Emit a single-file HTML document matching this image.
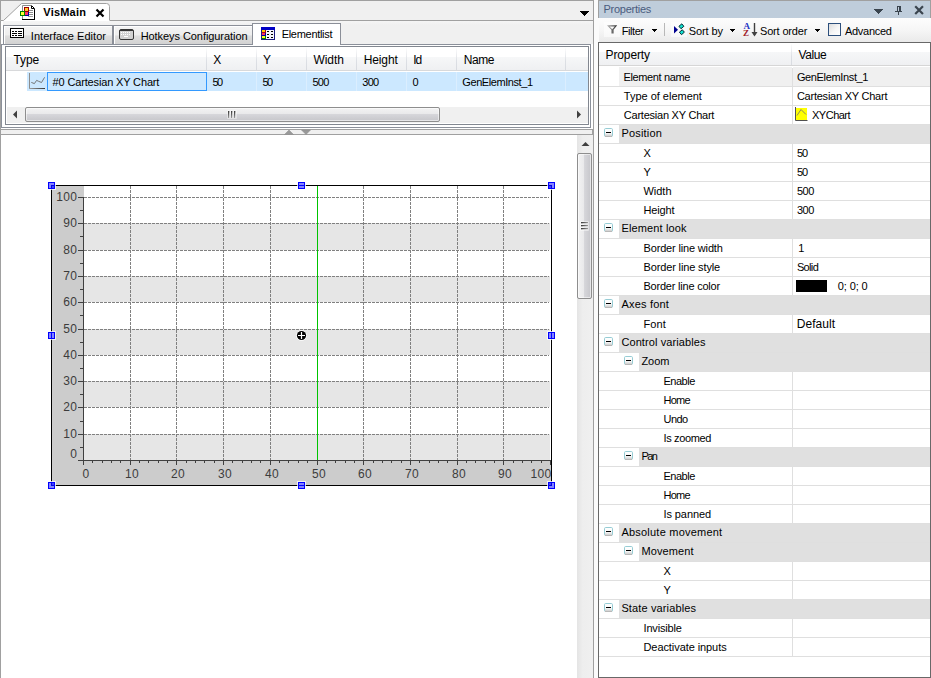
<!DOCTYPE html>
<html><head><meta charset="utf-8"><title>VisMain</title>
<style>
html,body{margin:0;padding:0;background:#fff;overflow:hidden;}
#root{position:relative;width:931px;height:678px;overflow:hidden;font-family:"Liberation Sans",sans-serif;}
#root div,#root svg,#root span{position:absolute;}
.t{white-space:pre;}
</style></head><body>
<div id="root">
<div style="left:0px;top:0px;width:931px;height:678px;background:#f0f0f0;"></div>
<svg style="left:0;top:0" width="0" height="0"><defs><linearGradient id="eg" x1="0" y1="0" x2="0" y2="1"><stop offset="0" stop-color="#fff"/><stop offset="0.55" stop-color="#fafafa"/><stop offset="1" stop-color="#c8c8c8"/></linearGradient></defs></svg>
<div style="left:1px;top:21px;width:592px;height:657px;background:#fff;"></div>
<div style="left:0px;top:0px;width:931px;height:1px;background:#a0a0a0;"></div>
<div style="left:0px;top:0px;width:1px;height:678px;background:#a0a0a0;"></div>
<div style="left:1px;top:21px;width:592px;height:4px;background:linear-gradient(#f5f5f5,#f0f0f0);"></div>
<div style="left:1px;top:21px;width:2px;height:4px;background:#fff;"></div>
<div style="left:3px;top:25px;width:590px;height:19px;background:#f0f0f0;"></div>
<svg style="left:0px;top:0px;" width="120" height="21" viewBox="0 0 120 21"><path d="M0.5,20.5 L3.5,20.5 L21.5,3.5 L106.5,3.5 Q109.5,3.5 109.5,6.5 L109.5,21 L0.5,21 Z" fill="#fff" stroke="none"/><path d="M0.5,20.5 L3.5,20.5 L21.5,3.5 L106.5,3.5 Q109.5,3.5 109.5,6.5 L109.5,20.5" fill="none" stroke="#a0a0a0" stroke-width="1"/></svg>
<div style="left:4px;top:20px;width:105px;height:1px;background:#fff;"></div>
<div style="left:110px;top:20px;width:484px;height:1px;background:#a0a0a0;"></div>
<svg style="left:19px;top:4px;" width="18" height="17" viewBox="0 0 18 17"><path d="M3.5,1.5 H12.5 L15.5,4.5 V15.5 H3.5 Z" fill="#fff" stroke="none"/>
<path d="M3.5,15.5 V1.5 H12.5" fill="none" stroke="#8a8a8a" stroke-width="1"/>
<path d="M12.5,1.5 L15.5,4.5 V15.5 H3" fill="none" stroke="#000" stroke-width="1"/>
<path d="M12.5,2 V4.5 H15" fill="none" stroke="#000" stroke-width="1"/>
<rect x="3" y="15" width="13" height="1" fill="#000"/>
<rect x="10" y="6" width="4" height="1" fill="#8c8c8c"/><rect x="10" y="8" width="4" height="1" fill="#8c8c8c"/><rect x="10" y="10" width="4" height="1" fill="#8c8c8c"/><rect x="9" y="12" width="5" height="1" fill="#a0a0a0"/>
<rect x="5" y="3" width="5" height="5" fill="#a00000"/><rect x="6" y="4" width="3" height="3" fill="#ffc830"/>
<rect x="1" y="7" width="5" height="5" fill="#008000"/><rect x="2" y="8" width="3" height="3" fill="#ffff38"/>
<rect x="6" y="8" width="4" height="4" fill="#0000a0"/><rect x="6" y="8" width="3" height="3" fill="#ff3068"/></svg>
<span class="t" style="left:43.30px;top:4.69px;font-size:11px;line-height:15px;color:#000;letter-spacing:0.203px;font-weight:bold;">VisMain</span>
<svg style="left:95px;top:8px;" width="10" height="10" viewBox="0 0 10 10"><path d="M1.5,1.5 L8.5,8.5 M8.5,1.5 L1.5,8.5" stroke="#000" stroke-width="2.2" fill="none"/></svg>
<svg style="left:580px;top:11px;shape-rendering:crispEdges;" width="9" height="5" viewBox="0 0 9 5"><rect x="0" y="0" width="9" height="1"/><rect x="1" y="1" width="7" height="1"/><rect x="2" y="2" width="5" height="1"/><rect x="3" y="3" width="3" height="1"/><rect x="4" y="4" width="1" height="1"/></svg>
<div style="left:593px;top:0px;width:1px;height:678px;background:#a0a0a0;"></div>
<div style="left:3px;top:25px;width:110px;height:19px;background:linear-gradient(#f4f4f4 0%,#eeeeee 50%,#dedede 55%,#d2d2d2 100%);border:1px solid #8b8f98;border-bottom:none;box-sizing:border-box;box-shadow:inset 1px 1px 0 #fff;"></div>
<div style="left:113px;top:25px;width:140px;height:19px;background:linear-gradient(#f4f4f4 0%,#eeeeee 50%,#dedede 55%,#d2d2d2 100%);border:1px solid #8b8f98;border-bottom:none;box-sizing:border-box;box-shadow:inset 1px 1px 0 #fff;"></div>
<div style="left:1px;top:44px;width:590px;height:84px;border:1px solid #8b909a;box-sizing:border-box;background:#fff;"></div>
<div style="left:252px;top:23px;width:89px;height:22px;background:#fff;border:1px solid #8b8f98;border-bottom:none;box-sizing:border-box;"></div>
<div style="left:5px;top:46px;width:584px;height:79px;background:#fff;border:1px solid #828790;box-sizing:border-box;"></div>
<div style="left:253px;top:44px;width:87px;height:2px;background:#fff;"></div>
<svg style="left:9px;top:27px;" width="17" height="13" viewBox="0 0 17 13"><rect x="1.5" y="1.5" width="13" height="9" fill="#fff" stroke="#000" stroke-width="1"/>
<rect x="3" y="4" width="2" height="1" fill="#000"/><rect x="6" y="4" width="2" height="1" fill="#000"/><rect x="9" y="4" width="4" height="1" fill="#000"/>
<rect x="3" y="6" width="5" height="1" fill="#000"/><rect x="9" y="6" width="4" height="1" fill="#000"/>
<rect x="3" y="8" width="2" height="1" fill="#000"/><rect x="6" y="8" width="2" height="1" fill="#000"/><rect x="9" y="8" width="4" height="1" fill="#000"/></svg>
<span class="t" style="left:30.80px;top:28.69px;font-size:11px;line-height:15px;color:#000;letter-spacing:0.037px;">Interface Editor</span>
<svg style="left:118px;top:28px;" width="18" height="13" viewBox="0 0 18 13"><rect x="1.5" y="1.5" width="14" height="10" rx="1.5" fill="#d2d2d2" stroke="#363636" stroke-width="1"/>
<rect x="2" y="2" width="13" height="1" fill="#363636"/>
<rect x="3" y="4" width="1" height="1" fill="#fff"/><rect x="5" y="4" width="1" height="1" fill="#fff"/><rect x="7" y="4" width="1" height="1" fill="#fff"/><rect x="9" y="4" width="1" height="1" fill="#fff"/><rect x="11" y="4" width="1" height="1" fill="#fff"/>
<rect x="3" y="6" width="1" height="1" fill="#fff"/><rect x="5" y="6" width="1" height="1" fill="#fff"/><rect x="7" y="6" width="1" height="1" fill="#fff"/><rect x="9" y="6" width="1" height="1" fill="#fff"/><rect x="11" y="6" width="1" height="1" fill="#fff"/>
<rect x="6" y="8" width="4" height="1" fill="#fff"/></svg>
<span class="t" style="left:140.70px;top:28.69px;font-size:11px;line-height:15px;color:#000;letter-spacing:-0.068px;">Hotkeys Configuration</span>
<svg style="left:260px;top:26px;" width="16" height="15" viewBox="0 0 16 15"><rect x="1" y="1" width="14" height="13" fill="#1c1c80"/>
<rect x="1" y="1" width="14" height="3" fill="#0000c4"/>
<rect x="2" y="4" width="12" height="9" fill="#f4f4fc"/>
<rect x="2" y="4" width="4" height="3" fill="#a00020"/><rect x="2" y="4" width="3" height="2" fill="#ffc800"/>
<rect x="2" y="7" width="4" height="3" fill="#0000a0"/><rect x="2" y="7" width="3" height="2" fill="#ff3060"/>
<rect x="2" y="10" width="4" height="3" fill="#008000"/><rect x="2" y="10" width="3" height="2" fill="#ffff20"/>
<rect x="7" y="5" width="2" height="1" fill="#000"/><rect x="11" y="5" width="2" height="1" fill="#000"/>
<rect x="7" y="8" width="2" height="1" fill="#000"/><rect x="11" y="8" width="2" height="1" fill="#000"/>
<rect x="7" y="11" width="2" height="1" fill="#000"/><rect x="11" y="11" width="2" height="1" fill="#000"/></svg>
<span class="t" style="left:281.70px;top:26.69px;font-size:11px;line-height:15px;color:#000;letter-spacing:-0.298px;">Elementlist</span>
<div style="left:6px;top:47px;width:582px;height:23px;background:linear-gradient(#fff 0%,#fff 43%,#f6f7f8 44%,#eff0f2 100%);"></div>
<div style="left:6px;top:70px;width:582px;height:1px;background:#d8d9db;"></div>
<div style="left:206px;top:47px;width:1px;height:23px;background:linear-gradient(#fff,#dcdfe4 60%,#d8dbe0);"></div>
<div style="left:256px;top:47px;width:1px;height:23px;background:linear-gradient(#fff,#dcdfe4 60%,#d8dbe0);"></div>
<div style="left:306px;top:47px;width:1px;height:23px;background:linear-gradient(#fff,#dcdfe4 60%,#d8dbe0);"></div>
<div style="left:356px;top:47px;width:1px;height:23px;background:linear-gradient(#fff,#dcdfe4 60%,#d8dbe0);"></div>
<div style="left:406px;top:47px;width:1px;height:23px;background:linear-gradient(#fff,#dcdfe4 60%,#d8dbe0);"></div>
<div style="left:456px;top:47px;width:1px;height:23px;background:linear-gradient(#fff,#dcdfe4 60%,#d8dbe0);"></div>
<div style="left:565px;top:47px;width:1px;height:23px;background:linear-gradient(#fff,#dcdfe4 60%,#d8dbe0);"></div>
<span class="t" style="left:13.50px;top:51.84px;font-size:12px;line-height:16px;color:#000;letter-spacing:-0.100px;">Type</span>
<span class="t" style="left:213.30px;top:51.84px;font-size:12px;line-height:16px;color:#000;">X</span>
<span class="t" style="left:262.90px;top:51.84px;font-size:12px;line-height:16px;color:#000;">Y</span>
<span class="t" style="left:313.40px;top:51.84px;font-size:12px;line-height:16px;color:#000;letter-spacing:-0.004px;">Width</span>
<span class="t" style="left:363.70px;top:51.84px;font-size:12px;line-height:16px;color:#000;letter-spacing:-0.120px;">Height</span>
<span class="t" style="left:413.30px;top:51.84px;font-size:12px;line-height:16px;color:#000;letter-spacing:-1.216px;">Id</span>
<span class="t" style="left:463.80px;top:51.84px;font-size:12px;line-height:16px;color:#000;letter-spacing:-0.433px;">Name</span>
<div style="left:27px;top:72px;width:561px;height:19px;background:#cce8ff;"></div>
<div style="left:47px;top:72px;width:160px;height:19px;border:1px solid #3399ff;box-sizing:border-box;background:#cce8ff;"></div>
<div style="left:256px;top:72px;width:1px;height:19px;background:#dbeeff;"></div>
<div style="left:306px;top:72px;width:1px;height:19px;background:#dbeeff;"></div>
<div style="left:356px;top:72px;width:1px;height:19px;background:#dbeeff;"></div>
<div style="left:406px;top:72px;width:1px;height:19px;background:#dbeeff;"></div>
<div style="left:456px;top:72px;width:1px;height:19px;background:#dbeeff;"></div>
<div style="left:565px;top:72px;width:1px;height:19px;background:#dbeeff;"></div>
<svg style="left:29px;top:72px;" width="18" height="19" viewBox="0 0 18 19"><defs><linearGradient id="ig" x1="0" y1="0" x2="1" y2="0"><stop offset="0" stop-color="#a0a0a0"/><stop offset="1" stop-color="#383838"/></linearGradient></defs><path d="M0.5,1 V16" fill="none" stroke="#8c8c8c" stroke-width="1"/><rect x="0" y="16" width="16" height="1" fill="url(#ig)"/><path d="M2.3,10.4 L5.4,11.6 L7.6,8.4 L9.6,9.3 L12.5,10.5 L15.6,5.3" fill="none" stroke="#6a6a6a" stroke-width="0.9"/></svg>
<span class="t" style="left:52.60px;top:74.69px;font-size:11px;line-height:15px;color:#000;letter-spacing:-0.152px;">#0 Cartesian XY Chart</span>
<span class="t" style="left:212.50px;top:74.69px;font-size:11px;line-height:15px;color:#000;letter-spacing:-1.600px;">50</span>
<span class="t" style="left:262.50px;top:74.69px;font-size:11px;line-height:15px;color:#000;letter-spacing:-1.600px;">50</span>
<span class="t" style="left:312.40px;top:74.69px;font-size:11px;line-height:15px;color:#000;letter-spacing:-0.742px;">500</span>
<span class="t" style="left:362.30px;top:74.69px;font-size:11px;line-height:15px;color:#000;letter-spacing:-0.742px;">300</span>
<span class="t" style="left:412.50px;top:74.69px;font-size:11px;line-height:15px;color:#000;">0</span>
<span class="t" style="left:462.30px;top:74.69px;font-size:11px;line-height:15px;color:#000;letter-spacing:-0.421px;">GenElemInst_1</span>
<div style="left:7px;top:107px;width:581px;height:16px;background:#f0f0f0;"></div>
<div style="left:25px;top:107px;width:415px;height:15px;border:1px solid #8e8e8e;border-radius:2px;box-sizing:border-box;background:linear-gradient(#f3f3f3 0%,#e9e9eb 45%,#d6d6da 50%,#c6c6cb 100%);box-shadow:inset 0 0 0 1px rgba(255,255,255,0.55);"></div>
<svg style="left:11px;top:109px;" width="8" height="11" viewBox="0 0 8 11"><path d="M6,1.5 L2,5.5 L6,9.5 Z" fill="#404040"/></svg>
<svg style="left:575px;top:109px;" width="8" height="11" viewBox="0 0 8 11"><path d="M2,1.5 L6,5.5 L2,9.5 Z" fill="#404040"/></svg>
<div style="left:227px;top:110px;width:10px;height:9px;background:rgba(255,255,255,0.4);border-radius:1px;"></div>
<div style="left:228px;top:111px;width:1px;height:7px;background:linear-gradient(#3c3c3c,#5a5a5a 40%,#9a9a9a);"></div>
<div style="left:229px;top:111px;width:1px;height:7px;background:linear-gradient(#6a6a6a,#b8b8b8 40%,#e0e0e0);opacity:.5;"></div>
<div style="left:231px;top:111px;width:1px;height:7px;background:linear-gradient(#3c3c3c,#5a5a5a 40%,#9a9a9a);"></div>
<div style="left:232px;top:111px;width:1px;height:7px;background:linear-gradient(#6a6a6a,#b8b8b8 40%,#e0e0e0);opacity:.5;"></div>
<div style="left:234px;top:111px;width:1px;height:7px;background:linear-gradient(#3c3c3c,#5a5a5a 40%,#9a9a9a);"></div>
<div style="left:235px;top:111px;width:1px;height:7px;background:linear-gradient(#6a6a6a,#b8b8b8 40%,#e0e0e0);opacity:.5;"></div>
<div style="left:1px;top:129px;width:593px;height:6px;background:#f0f0f0;border:1px solid #a0a0a0;border-left:none;border-right:2px solid #a0a0a0;box-sizing:border-box;"></div>
<svg style="left:284px;top:129px;" width="10" height="7" viewBox="0 0 10 7"><path d="M0.5,5.5 L5,1 L9.5,5.5 Z" fill="#999" stroke="#8a8a8a" stroke-width="0.5"/></svg>
<svg style="left:301px;top:129px;" width="10" height="7" viewBox="0 0 10 7"><path d="M0.5,1 L9.5,1 L5,5.5 Z" fill="#999" stroke="#8a8a8a" stroke-width="0.5"/></svg>
<div style="left:1px;top:135px;width:576px;height:543px;background:#fff;"></div>
<div style="left:577px;top:135px;width:16px;height:543px;background:linear-gradient(90deg,#e4e4e4 0%,#eeeeee 35%,#f0f0f0 100%);"></div>
<div style="left:577px;top:153px;width:15px;height:146px;border:1px solid #8e8e8e;border-radius:2px;box-sizing:border-box;background:linear-gradient(90deg,#f3f3f3 0%,#e9e9eb 45%,#d6d6da 50%,#c6c6cb 100%);box-shadow:inset 0 0 0 1px rgba(255,255,255,0.55);"></div>
<svg style="left:580px;top:140px;" width="11" height="8" viewBox="0 0 11 8"><path d="M1.5,6 L5.5,2 L9.5,6 Z" fill="#404040"/></svg>
<div style="left:580px;top:221px;width:9px;height:10px;background:rgba(255,255,255,0.45);border-radius:1px;"></div>
<div style="left:581px;top:222px;width:7px;height:1px;background:linear-gradient(90deg,#3c3c3c,#5a5a5a 40%,#9a9a9a);"></div>
<div style="left:581px;top:223px;width:7px;height:1px;background:linear-gradient(90deg,#6a6a6a,#b8b8b8 40%,#e0e0e0);opacity:.5;"></div>
<div style="left:581px;top:225px;width:7px;height:1px;background:linear-gradient(90deg,#3c3c3c,#5a5a5a 40%,#9a9a9a);"></div>
<div style="left:581px;top:226px;width:7px;height:1px;background:linear-gradient(90deg,#6a6a6a,#b8b8b8 40%,#e0e0e0);opacity:.5;"></div>
<div style="left:581px;top:228px;width:7px;height:1px;background:linear-gradient(90deg,#3c3c3c,#5a5a5a 40%,#9a9a9a);"></div>
<div style="left:581px;top:229px;width:7px;height:1px;background:linear-gradient(90deg,#6a6a6a,#b8b8b8 40%,#e0e0e0);opacity:.5;"></div>
<svg style="left:0;top:0" width="600" height="678" viewBox="0 0 600 678" shape-rendering="crispEdges"><rect x="51.5" y="185.5" width="500" height="300" fill="#ccc" stroke="#000" stroke-width="1"/><rect x="84" y="186" width="467" height="274" fill="#fff"/><rect x="84" y="223" width="466" height="27" fill="#e6e6e6"/><rect x="84" y="276" width="466" height="26" fill="#e6e6e6"/><rect x="84" y="329" width="466" height="26" fill="#e6e6e6"/><rect x="84" y="381" width="466" height="26" fill="#e6e6e6"/><rect x="84" y="434" width="466" height="26" fill="#e6e6e6"/><path d="M84,197.5 H549" stroke="#808080" stroke-width="1" stroke-dasharray="3 1" fill="none"/><path d="M84,223.5 H549" stroke="#808080" stroke-width="1" stroke-dasharray="3 1" fill="none"/><path d="M84,250.5 H549" stroke="#808080" stroke-width="1" stroke-dasharray="3 1" fill="none"/><path d="M84,276.5 H549" stroke="#808080" stroke-width="1" stroke-dasharray="3 1" fill="none"/><path d="M84,302.5 H549" stroke="#808080" stroke-width="1" stroke-dasharray="3 1" fill="none"/><path d="M84,329.5 H549" stroke="#808080" stroke-width="1" stroke-dasharray="3 1" fill="none"/><path d="M84,355.5 H549" stroke="#808080" stroke-width="1" stroke-dasharray="3 1" fill="none"/><path d="M84,381.5 H549" stroke="#808080" stroke-width="1" stroke-dasharray="3 1" fill="none"/><path d="M84,407.5 H549" stroke="#808080" stroke-width="1" stroke-dasharray="3 1" fill="none"/><path d="M84,434.5 H549" stroke="#808080" stroke-width="1" stroke-dasharray="3 1" fill="none"/><path d="M130.5,186 V460" stroke="#808080" stroke-width="1" stroke-dasharray="3 1" fill="none"/><path d="M176.5,186 V460" stroke="#808080" stroke-width="1" stroke-dasharray="3 1" fill="none"/><path d="M223.5,186 V460" stroke="#808080" stroke-width="1" stroke-dasharray="3 1" fill="none"/><path d="M270.5,186 V460" stroke="#808080" stroke-width="1" stroke-dasharray="3 1" fill="none"/><path d="M317.5,186 V460" stroke="#808080" stroke-width="1" stroke-dasharray="3 1" fill="none"/><path d="M363.5,186 V460" stroke="#808080" stroke-width="1" stroke-dasharray="3 1" fill="none"/><path d="M410.5,186 V460" stroke="#808080" stroke-width="1" stroke-dasharray="3 1" fill="none"/><path d="M457.5,186 V460" stroke="#808080" stroke-width="1" stroke-dasharray="3 1" fill="none"/><path d="M503.5,186 V460" stroke="#808080" stroke-width="1" stroke-dasharray="3 1" fill="none"/><path d="M83.5,197 V465" stroke="#404040" stroke-width="1"/><path d="M78,460.5 H551" stroke="#404040" stroke-width="1"/><path d="M78,197.5 H84" stroke="#404040" stroke-width="1"/><path d="M80,210.5 H84" stroke="#404040" stroke-width="1"/><path d="M78,223.5 H84" stroke="#404040" stroke-width="1"/><path d="M80,236.5 H84" stroke="#404040" stroke-width="1"/><path d="M78,250.5 H84" stroke="#404040" stroke-width="1"/><path d="M80,263.5 H84" stroke="#404040" stroke-width="1"/><path d="M78,276.5 H84" stroke="#404040" stroke-width="1"/><path d="M80,289.5 H84" stroke="#404040" stroke-width="1"/><path d="M78,302.5 H84" stroke="#404040" stroke-width="1"/><path d="M80,315.5 H84" stroke="#404040" stroke-width="1"/><path d="M78,329.5 H84" stroke="#404040" stroke-width="1"/><path d="M80,342.5 H84" stroke="#404040" stroke-width="1"/><path d="M78,355.5 H84" stroke="#404040" stroke-width="1"/><path d="M80,368.5 H84" stroke="#404040" stroke-width="1"/><path d="M78,381.5 H84" stroke="#404040" stroke-width="1"/><path d="M80,394.5 H84" stroke="#404040" stroke-width="1"/><path d="M78,407.5 H84" stroke="#404040" stroke-width="1"/><path d="M80,421.5 H84" stroke="#404040" stroke-width="1"/><path d="M78,434.5 H84" stroke="#404040" stroke-width="1"/><path d="M80,447.5 H84" stroke="#404040" stroke-width="1"/><path d="M83.5,461 V465" stroke="#404040" stroke-width="1"/><path d="M92.5,461 V463" stroke="#404040" stroke-width="1"/><path d="M102.5,461 V463" stroke="#404040" stroke-width="1"/><path d="M111.5,461 V463" stroke="#404040" stroke-width="1"/><path d="M120.5,461 V463" stroke="#404040" stroke-width="1"/><path d="M130.5,461 V465" stroke="#404040" stroke-width="1"/><path d="M139.5,461 V463" stroke="#404040" stroke-width="1"/><path d="M148.5,461 V463" stroke="#404040" stroke-width="1"/><path d="M158.5,461 V463" stroke="#404040" stroke-width="1"/><path d="M167.5,461 V463" stroke="#404040" stroke-width="1"/><path d="M176.5,461 V465" stroke="#404040" stroke-width="1"/><path d="M186.5,461 V463" stroke="#404040" stroke-width="1"/><path d="M195.5,461 V463" stroke="#404040" stroke-width="1"/><path d="M204.5,461 V463" stroke="#404040" stroke-width="1"/><path d="M214.5,461 V463" stroke="#404040" stroke-width="1"/><path d="M223.5,461 V465" stroke="#404040" stroke-width="1"/><path d="M232.5,461 V463" stroke="#404040" stroke-width="1"/><path d="M242.5,461 V463" stroke="#404040" stroke-width="1"/><path d="M251.5,461 V463" stroke="#404040" stroke-width="1"/><path d="M260.5,461 V463" stroke="#404040" stroke-width="1"/><path d="M270.5,461 V465" stroke="#404040" stroke-width="1"/><path d="M279.5,461 V463" stroke="#404040" stroke-width="1"/><path d="M288.5,461 V463" stroke="#404040" stroke-width="1"/><path d="M298.5,461 V463" stroke="#404040" stroke-width="1"/><path d="M307.5,461 V463" stroke="#404040" stroke-width="1"/><path d="M317.5,461 V465" stroke="#404040" stroke-width="1"/><path d="M326.5,461 V463" stroke="#404040" stroke-width="1"/><path d="M335.5,461 V463" stroke="#404040" stroke-width="1"/><path d="M345.5,461 V463" stroke="#404040" stroke-width="1"/><path d="M354.5,461 V463" stroke="#404040" stroke-width="1"/><path d="M363.5,461 V465" stroke="#404040" stroke-width="1"/><path d="M373.5,461 V463" stroke="#404040" stroke-width="1"/><path d="M382.5,461 V463" stroke="#404040" stroke-width="1"/><path d="M391.5,461 V463" stroke="#404040" stroke-width="1"/><path d="M401.5,461 V463" stroke="#404040" stroke-width="1"/><path d="M410.5,461 V465" stroke="#404040" stroke-width="1"/><path d="M419.5,461 V463" stroke="#404040" stroke-width="1"/><path d="M429.5,461 V463" stroke="#404040" stroke-width="1"/><path d="M438.5,461 V463" stroke="#404040" stroke-width="1"/><path d="M447.5,461 V463" stroke="#404040" stroke-width="1"/><path d="M457.5,461 V465" stroke="#404040" stroke-width="1"/><path d="M466.5,461 V463" stroke="#404040" stroke-width="1"/><path d="M475.5,461 V463" stroke="#404040" stroke-width="1"/><path d="M485.5,461 V463" stroke="#404040" stroke-width="1"/><path d="M494.5,461 V463" stroke="#404040" stroke-width="1"/><path d="M503.5,461 V465" stroke="#404040" stroke-width="1"/><path d="M513.5,461 V463" stroke="#404040" stroke-width="1"/><path d="M522.5,461 V463" stroke="#404040" stroke-width="1"/><path d="M531.5,461 V463" stroke="#404040" stroke-width="1"/><path d="M541.5,461 V463" stroke="#404040" stroke-width="1"/><path d="M550.5,461 V465" stroke="#404040" stroke-width="1"/><path d="M317.5,186 V460" stroke="#00c400" stroke-width="1"/></svg>
<svg style="left:0;top:0" width="600" height="678" viewBox="0 0 600 678"><circle cx="301.5" cy="335.5" r="5.3" fill="#fff"/><circle cx="301.5" cy="335.5" r="4.6" fill="#000"/><path d="M298,335.5 H305 M301.5,332 V339" stroke="#fff" stroke-width="1.2"/></svg>
<svg style="left:0;top:0" width="600" height="678" viewBox="0 0 600 678"><g fill="#3c3c3c" font-family="'Liberation Sans',sans-serif" font-size="12"><text x="56.3 63.3 70.3" y="200.8">100</text><text x="63.3 70.3" y="226.8">90</text><text x="63.3 70.3" y="253.8">80</text><text x="63.3 70.3" y="279.8">70</text><text x="63.3 70.3" y="305.8">60</text><text x="63.3 70.3" y="332.8">50</text><text x="63.3 70.3" y="358.8">40</text><text x="63.3 70.3" y="384.8">30</text><text x="63.3 70.3" y="410.8">20</text><text x="63.3 70.3" y="437.8">10</text><text x="70.3" y="458">0</text><text x="82.4" y="478">0</text><text x="125 132" y="478">10</text><text x="171 178" y="478">20</text><text x="218 225" y="478">30</text><text x="265 272" y="478">40</text><text x="312 319" y="478">50</text><text x="358 365" y="478">60</text><text x="405 412" y="478">70</text><text x="452 459" y="478">80</text><text x="498 505" y="478">90</text><text x="530.5 537.5 544.5" y="478">100</text></g></svg>
<div style="left:48px;top:182px;width:7px;height:7px;background:#8484ff;border:1px solid #0000ff;box-sizing:border-box;box-shadow:0 0 0 1px rgba(255,255,255,0.75);"></div>
<div style="left:51px;top:185px;width:3px;height:1px;background:#0000e0;"></div>
<div style="left:51px;top:185px;width:1px;height:3px;background:#0000e0;"></div>
<div style="left:52px;top:186px;width:2px;height:2px;background:#4040ff;"></div>
<div style="left:298px;top:182px;width:7px;height:7px;background:#8484ff;border:1px solid #0000ff;box-sizing:border-box;box-shadow:0 0 0 1px rgba(255,255,255,0.75);"></div>
<div style="left:299px;top:185px;width:5px;height:1px;background:#0000ff;"></div>
<div style="left:548px;top:182px;width:7px;height:7px;background:#8484ff;border:1px solid #0000ff;box-sizing:border-box;box-shadow:0 0 0 1px rgba(255,255,255,0.75);"></div>
<div style="left:549px;top:185px;width:3px;height:1px;background:#0000e0;"></div>
<div style="left:551px;top:185px;width:1px;height:3px;background:#0000e0;"></div>
<div style="left:549px;top:186px;width:2px;height:2px;background:#4040ff;"></div>
<div style="left:48px;top:332px;width:7px;height:7px;background:#8484ff;border:1px solid #0000ff;box-sizing:border-box;box-shadow:0 0 0 1px rgba(255,255,255,0.75);"></div>
<div style="left:51px;top:333px;width:1px;height:5px;background:#0000ff;"></div>
<div style="left:548px;top:332px;width:7px;height:7px;background:#8484ff;border:1px solid #0000ff;box-sizing:border-box;box-shadow:0 0 0 1px rgba(255,255,255,0.75);"></div>
<div style="left:551px;top:333px;width:1px;height:5px;background:#0000ff;"></div>
<div style="left:48px;top:482px;width:7px;height:7px;background:#8484ff;border:1px solid #0000ff;box-sizing:border-box;box-shadow:0 0 0 1px rgba(255,255,255,0.75);"></div>
<div style="left:51px;top:485px;width:3px;height:1px;background:#0000e0;"></div>
<div style="left:51px;top:483px;width:1px;height:3px;background:#0000e0;"></div>
<div style="left:52px;top:483px;width:2px;height:2px;background:#4040ff;"></div>
<div style="left:298px;top:482px;width:7px;height:7px;background:#8484ff;border:1px solid #0000ff;box-sizing:border-box;box-shadow:0 0 0 1px rgba(255,255,255,0.75);"></div>
<div style="left:299px;top:485px;width:5px;height:1px;background:#0000ff;"></div>
<div style="left:548px;top:482px;width:7px;height:7px;background:#8484ff;border:1px solid #0000ff;box-sizing:border-box;box-shadow:0 0 0 1px rgba(255,255,255,0.75);"></div>
<div style="left:549px;top:485px;width:3px;height:1px;background:#0000e0;"></div>
<div style="left:551px;top:483px;width:1px;height:3px;background:#0000e0;"></div>
<div style="left:549px;top:483px;width:2px;height:2px;background:#4040ff;"></div>
<div style="left:594px;top:0px;width:4px;height:678px;background:#fbfbfb;"></div>
<div style="left:598px;top:1px;width:332px;height:17px;background:#bfcddb;"></div>
<div style="left:598px;top:1px;width:1px;height:17px;background:#a0a0a0;"></div>
<div style="left:930px;top:1px;width:1px;height:17px;background:#a0a0a0;"></div>
<span class="t" style="left:603.50px;top:1.69px;font-size:11px;line-height:15px;color:#4a5c7e;letter-spacing:-0.254px;">Properties</span>
<svg style="left:874px;top:9px;shape-rendering:crispEdges;" width="9" height="5" viewBox="0 0 9 5"><g fill="#3a444e"><rect x="0" y="0" width="9" height="1"/><rect x="1" y="1" width="7" height="1"/><rect x="2" y="2" width="5" height="1"/><rect x="3" y="3" width="3" height="1"/><rect x="4" y="4" width="1" height="1"/></g></svg>
<svg style="left:895px;top:6px;shape-rendering:crispEdges;" width="8" height="9" viewBox="0 0 8 9"><g fill="#3a444e"><rect x="2" y="0" width="4" height="1"/><rect x="2" y="0" width="1" height="5"/><rect x="4" y="0" width="2" height="5"/><rect x="0" y="5" width="7" height="1"/><rect x="3" y="6" width="1" height="3"/></g></svg>
<svg style="left:914px;top:5px;" width="11" height="10" viewBox="0 0 11 10"><path d="M2,2 L8.2,8.2 M8.2,2 L2,8.2" stroke="#3a444e" stroke-width="2.2" fill="none" stroke-linecap="square"/></svg>
<div style="left:599px;top:18px;width:332px;height:24px;background:linear-gradient(#fdfdfd 0%,#f6f6f6 50%,#eaeaea 100%);"></div>
<div style="left:598px;top:18px;width:1px;height:24px;background:#fbfbfb;"></div>
<div style="left:604px;top:22px;width:16px;height:15px;background:rgba(255,255,255,0.55);"></div>
<div style="left:671px;top:22px;width:16px;height:15px;background:rgba(255,255,255,0.55);"></div>
<svg style="left:605px;top:23px;" width="14" height="13" viewBox="0 0 14 13"><defs><linearGradient id="fg" x1="0" y1="0" x2="1" y2="0"><stop offset="0" stop-color="#c4c4c4"/><stop offset="0.5" stop-color="#707070"/><stop offset="1" stop-color="#2c2c2c"/></linearGradient></defs><path d="M1.8,2.3 H12.2 L8.6,6.8 V10.6 H6.4 V6.8 Z" fill="url(#fg)"/><path d="M4.4,3.4 H9.8 L7.2,6.2 Z" fill="#fafafa"/></svg>
<span class="t" style="left:621.70px;top:23.69px;font-size:11px;line-height:15px;color:#000;letter-spacing:-0.423px;">Filter</span>
<svg style="left:652px;top:29px;shape-rendering:crispEdges;" width="6" height="4" viewBox="0 0 6 4"><rect x="0" y="0" width="5" height="1" fill="#000"/><rect x="1" y="1" width="3" height="1" fill="#000"/><rect x="2" y="2" width="1" height="1" fill="#000"/></svg>
<div style="left:664px;top:23px;width:1px;height:13px;background:#b8b8b8;"></div>
<svg style="left:671px;top:22px;" width="15" height="15" viewBox="0 0 15 15"><path d="M3,4 L7,7.7 L3,11.4 Z" fill="#000090"/><rect x="-1.9" y="-1.6" width="3.8" height="3.2" transform="translate(10.4,4.3) rotate(-40)" fill="#10e0d0" stroke="#062830" stroke-width="0.9"/><rect x="-1.9" y="-1.6" width="3.8" height="3.2" transform="translate(10.9,10.2) rotate(-40)" fill="#10e0d0" stroke="#062830" stroke-width="0.9"/></svg>
<span class="t" style="left:688.80px;top:23.69px;font-size:11px;line-height:15px;color:#000;letter-spacing:-0.114px;">Sort by</span>
<svg style="left:730px;top:29px;shape-rendering:crispEdges;" width="6" height="4" viewBox="0 0 6 4"><rect x="0" y="0" width="5" height="1" fill="#000"/><rect x="1" y="1" width="3" height="1" fill="#000"/><rect x="2" y="2" width="1" height="1" fill="#000"/></svg>
<svg style="left:750px;top:22px;" width="8" height="16" viewBox="0 0 8 16"><path d="M4.5,1 V13" stroke="#404040" stroke-width="1.4" fill="none"/><path d="M1.5,10 L4.5,14.5 L7.5,10 Z" fill="#404040"/></svg>
<span class="t" style="left:743.6px;top:19.6px;font-family:'Liberation Serif',serif;font-weight:bold;font-size:9px;line-height:12px;color:#2434c4;">A</span>
<span class="t" style="left:743px;top:27.4px;font-family:'Liberation Serif',serif;font-weight:bold;font-size:9px;line-height:12px;color:#a02028;">Z</span>
<span class="t" style="left:760.00px;top:23.69px;font-size:11px;line-height:15px;color:#000;letter-spacing:-0.165px;">Sort order</span>
<svg style="left:815px;top:29px;shape-rendering:crispEdges;" width="6" height="4" viewBox="0 0 6 4"><rect x="0" y="0" width="5" height="1" fill="#000"/><rect x="1" y="1" width="3" height="1" fill="#000"/><rect x="2" y="2" width="1" height="1" fill="#000"/></svg>
<div style="left:828px;top:23px;width:13px;height:13px;border:1px solid #2c4f7c;box-sizing:border-box;background:linear-gradient(135deg,#dcdcdc 0%,#f6f6f6 55%,#fff 100%);"></div>
<span class="t" style="left:845.00px;top:23.69px;font-size:11px;line-height:15px;color:#000;letter-spacing:-0.296px;">Advanced</span>
<div style="left:598px;top:42px;width:333px;height:636px;background:#fff;border:1px solid #686868;box-sizing:border-box;"></div>
<div style="left:599px;top:43px;width:331px;height:22px;background:linear-gradient(#fff 0%,#fff 40%,#f6f7f8 41%,#eff0f2 100%);"></div>
<div style="left:599px;top:65px;width:331px;height:1px;background:#d6d6d6;"></div>
<div style="left:791px;top:43px;width:1px;height:22px;background:linear-gradient(#fff,#dcdfe4 60%,#d8dbe0);"></div>
<span class="t" style="left:605.50px;top:46.84px;font-size:12px;line-height:16px;color:#000;letter-spacing:-0.117px;">Property</span>
<span class="t" style="left:798.60px;top:46.84px;font-size:12px;line-height:16px;color:#000;letter-spacing:-0.404px;">Value</span>
<div style="left:599px;top:86px;width:331px;height:1px;background:#dfdfdf;"></div>
<div style="left:792px;top:68px;width:1px;height:18px;background:#dfdfdf;"></div>
<div style="left:619px;top:67px;width:173px;height:19px;background:#f0f0f0;"></div>
<div style="left:793px;top:67px;width:137px;height:19px;background:#f0f0f0;"></div>
<span class="t" style="left:623.50px;top:69.69px;font-size:11px;line-height:15px;color:#000;letter-spacing:-0.370px;">Element name</span>
<span class="t" style="left:796.90px;top:69.69px;font-size:11px;line-height:15px;color:#000;letter-spacing:-0.354px;">GenElemInst_1</span>
<div style="left:599px;top:105px;width:331px;height:1px;background:#dfdfdf;"></div>
<div style="left:792px;top:87px;width:1px;height:18px;background:#dfdfdf;"></div>
<span class="t" style="left:623.80px;top:88.69px;font-size:11px;line-height:15px;color:#000;letter-spacing:-0.011px;">Type of element</span>
<span class="t" style="left:796.90px;top:88.69px;font-size:11px;line-height:15px;color:#000;letter-spacing:-0.233px;">Cartesian XY Chart</span>
<div style="left:599px;top:124px;width:331px;height:1px;background:#dfdfdf;"></div>
<div style="left:792px;top:106px;width:1px;height:18px;background:#dfdfdf;"></div>
<span class="t" style="left:623.80px;top:107.69px;font-size:11px;line-height:15px;color:#000;letter-spacing:-0.233px;">Cartesian XY Chart</span>
<span class="t" style="left:812.00px;top:107.69px;font-size:11px;line-height:15px;color:#000;letter-spacing:-0.497px;">XYChart</span>
<div style="left:599px;top:143px;width:331px;height:1px;background:#dfdfdf;"></div>
<div style="left:619px;top:125px;width:311px;height:18px;background:#e0e0e0;"></div>
<svg style="left:604px;top:128px;" width="9" height="9" viewBox="0 0 9 9"><rect x="0.5" y="0.5" width="8" height="8" rx="1.2" fill="url(#eg)" stroke="#96ccd4" stroke-width="1"/><rect x="1" y="8" width="7" height="1" fill="#b8b8b8"/><rect x="2" y="4" width="5" height="1" fill="#000"/></svg>
<span class="t" style="left:621.40px;top:125.69px;font-size:11px;line-height:15px;color:#000;letter-spacing:0.202px;">Position</span>
<div style="left:599px;top:162px;width:331px;height:1px;background:#dfdfdf;"></div>
<div style="left:792px;top:144px;width:1px;height:18px;background:#dfdfdf;"></div>
<span class="t" style="left:643.50px;top:145.69px;font-size:11px;line-height:15px;color:#000;">X</span>
<span class="t" style="left:796.90px;top:145.69px;font-size:11px;line-height:15px;color:#000;letter-spacing:-1.000px;">50</span>
<div style="left:599px;top:181px;width:331px;height:1px;background:#dfdfdf;"></div>
<div style="left:792px;top:163px;width:1px;height:18px;background:#dfdfdf;"></div>
<span class="t" style="left:643.50px;top:164.69px;font-size:11px;line-height:15px;color:#000;">Y</span>
<span class="t" style="left:796.90px;top:164.69px;font-size:11px;line-height:15px;color:#000;letter-spacing:-1.000px;">50</span>
<div style="left:599px;top:200px;width:331px;height:1px;background:#dfdfdf;"></div>
<div style="left:792px;top:182px;width:1px;height:18px;background:#dfdfdf;"></div>
<span class="t" style="left:643.50px;top:183.69px;font-size:11px;line-height:15px;color:#000;letter-spacing:-0.025px;">Width</span>
<span class="t" style="left:796.90px;top:183.69px;font-size:11px;line-height:15px;color:#000;letter-spacing:-0.442px;">500</span>
<div style="left:599px;top:219px;width:331px;height:1px;background:#dfdfdf;"></div>
<div style="left:792px;top:201px;width:1px;height:18px;background:#dfdfdf;"></div>
<span class="t" style="left:643.50px;top:202.69px;font-size:11px;line-height:15px;color:#000;letter-spacing:-0.137px;">Height</span>
<span class="t" style="left:796.90px;top:202.69px;font-size:11px;line-height:15px;color:#000;letter-spacing:-0.442px;">300</span>
<div style="left:599px;top:238px;width:331px;height:1px;background:#dfdfdf;"></div>
<div style="left:619px;top:220px;width:311px;height:18px;background:#e0e0e0;"></div>
<svg style="left:604px;top:223px;" width="9" height="9" viewBox="0 0 9 9"><rect x="0.5" y="0.5" width="8" height="8" rx="1.2" fill="url(#eg)" stroke="#96ccd4" stroke-width="1"/><rect x="1" y="8" width="7" height="1" fill="#b8b8b8"/><rect x="2" y="4" width="5" height="1" fill="#000"/></svg>
<span class="t" style="left:621.40px;top:220.69px;font-size:11px;line-height:15px;color:#000;letter-spacing:0.148px;">Element look</span>
<div style="left:599px;top:257px;width:331px;height:1px;background:#dfdfdf;"></div>
<div style="left:792px;top:239px;width:1px;height:18px;background:#dfdfdf;"></div>
<span class="t" style="left:643.50px;top:240.69px;font-size:11px;line-height:15px;color:#000;letter-spacing:-0.161px;">Border line width</span>
<span class="t" style="left:798.30px;top:240.69px;font-size:11px;line-height:15px;color:#000;">1</span>
<div style="left:599px;top:276px;width:331px;height:1px;background:#dfdfdf;"></div>
<div style="left:792px;top:258px;width:1px;height:18px;background:#dfdfdf;"></div>
<span class="t" style="left:643.50px;top:259.69px;font-size:11px;line-height:15px;color:#000;letter-spacing:-0.136px;">Border line style</span>
<span class="t" style="left:796.90px;top:259.69px;font-size:11px;line-height:15px;color:#000;letter-spacing:-0.650px;">Solid</span>
<div style="left:599px;top:295px;width:331px;height:1px;background:#dfdfdf;"></div>
<div style="left:792px;top:277px;width:1px;height:18px;background:#dfdfdf;"></div>
<span class="t" style="left:643.50px;top:278.69px;font-size:11px;line-height:15px;color:#000;letter-spacing:-0.217px;">Border line color</span>
<span class="t" style="left:837.80px;top:278.69px;font-size:11px;line-height:15px;color:#000;letter-spacing:-0.109px;">0; 0; 0</span>
<div style="left:599px;top:314px;width:331px;height:1px;background:#dfdfdf;"></div>
<div style="left:619px;top:296px;width:311px;height:18px;background:#e0e0e0;"></div>
<svg style="left:604px;top:299px;" width="9" height="9" viewBox="0 0 9 9"><rect x="0.5" y="0.5" width="8" height="8" rx="1.2" fill="url(#eg)" stroke="#96ccd4" stroke-width="1"/><rect x="1" y="8" width="7" height="1" fill="#b8b8b8"/><rect x="2" y="4" width="5" height="1" fill="#000"/></svg>
<span class="t" style="left:621.40px;top:296.69px;font-size:11px;line-height:15px;color:#000;letter-spacing:0.206px;">Axes font</span>
<div style="left:599px;top:333px;width:331px;height:1px;background:#dfdfdf;"></div>
<div style="left:792px;top:315px;width:1px;height:18px;background:#dfdfdf;"></div>
<span class="t" style="left:643.50px;top:316.69px;font-size:11px;line-height:15px;color:#000;letter-spacing:0.139px;">Font</span>
<span class="t" style="left:796.80px;top:315.84px;font-size:12px;line-height:16px;color:#000;letter-spacing:0.031px;">Default</span>
<div style="left:599px;top:352px;width:331px;height:1px;background:#dfdfdf;"></div>
<div style="left:619px;top:334px;width:311px;height:18px;background:#e0e0e0;"></div>
<svg style="left:604px;top:337px;" width="9" height="9" viewBox="0 0 9 9"><rect x="0.5" y="0.5" width="8" height="8" rx="1.2" fill="url(#eg)" stroke="#96ccd4" stroke-width="1"/><rect x="1" y="8" width="7" height="1" fill="#b8b8b8"/><rect x="2" y="4" width="5" height="1" fill="#000"/></svg>
<span class="t" style="left:621.40px;top:334.69px;font-size:11px;line-height:15px;color:#000;letter-spacing:0.095px;">Control variables</span>
<div style="left:599px;top:371px;width:331px;height:1px;background:#dfdfdf;"></div>
<div style="left:639px;top:353px;width:291px;height:18px;background:#e0e0e0;"></div>
<svg style="left:624px;top:356px;" width="9" height="9" viewBox="0 0 9 9"><rect x="0.5" y="0.5" width="8" height="8" rx="1.2" fill="url(#eg)" stroke="#96ccd4" stroke-width="1"/><rect x="1" y="8" width="7" height="1" fill="#b8b8b8"/><rect x="2" y="4" width="5" height="1" fill="#000"/></svg>
<span class="t" style="left:641.40px;top:353.69px;font-size:11px;line-height:15px;color:#000;">Zoom</span>
<div style="left:599px;top:390px;width:331px;height:1px;background:#dfdfdf;"></div>
<div style="left:792px;top:372px;width:1px;height:18px;background:#dfdfdf;"></div>
<span class="t" style="left:663.50px;top:373.69px;font-size:11px;line-height:15px;color:#000;letter-spacing:-0.497px;">Enable</span>
<div style="left:599px;top:409px;width:331px;height:1px;background:#dfdfdf;"></div>
<div style="left:792px;top:391px;width:1px;height:18px;background:#dfdfdf;"></div>
<span class="t" style="left:663.50px;top:392.69px;font-size:11px;line-height:15px;color:#000;letter-spacing:-0.767px;">Home</span>
<div style="left:599px;top:428px;width:331px;height:1px;background:#dfdfdf;"></div>
<div style="left:792px;top:410px;width:1px;height:18px;background:#dfdfdf;"></div>
<span class="t" style="left:663.50px;top:411.69px;font-size:11px;line-height:15px;color:#000;letter-spacing:-0.561px;">Undo</span>
<div style="left:599px;top:447px;width:331px;height:1px;background:#dfdfdf;"></div>
<div style="left:792px;top:429px;width:1px;height:18px;background:#dfdfdf;"></div>
<span class="t" style="left:663.50px;top:430.69px;font-size:11px;line-height:15px;color:#000;letter-spacing:-0.359px;">Is zoomed</span>
<div style="left:599px;top:466px;width:331px;height:1px;background:#dfdfdf;"></div>
<div style="left:639px;top:448px;width:291px;height:18px;background:#e0e0e0;"></div>
<svg style="left:624px;top:451px;" width="9" height="9" viewBox="0 0 9 9"><rect x="0.5" y="0.5" width="8" height="8" rx="1.2" fill="url(#eg)" stroke="#96ccd4" stroke-width="1"/><rect x="1" y="8" width="7" height="1" fill="#b8b8b8"/><rect x="2" y="4" width="5" height="1" fill="#000"/></svg>
<span class="t" style="left:641.40px;top:448.69px;font-size:11px;line-height:15px;color:#000;letter-spacing:-1.492px;">Pan</span>
<div style="left:599px;top:485px;width:331px;height:1px;background:#dfdfdf;"></div>
<div style="left:792px;top:467px;width:1px;height:18px;background:#dfdfdf;"></div>
<span class="t" style="left:663.50px;top:468.69px;font-size:11px;line-height:15px;color:#000;letter-spacing:-0.497px;">Enable</span>
<div style="left:599px;top:504px;width:331px;height:1px;background:#dfdfdf;"></div>
<div style="left:792px;top:486px;width:1px;height:18px;background:#dfdfdf;"></div>
<span class="t" style="left:663.50px;top:487.69px;font-size:11px;line-height:15px;color:#000;letter-spacing:-0.767px;">Home</span>
<div style="left:599px;top:523px;width:331px;height:1px;background:#dfdfdf;"></div>
<div style="left:792px;top:505px;width:1px;height:18px;background:#dfdfdf;"></div>
<span class="t" style="left:663.50px;top:506.69px;font-size:11px;line-height:15px;color:#000;letter-spacing:-0.094px;">Is panned</span>
<div style="left:599px;top:542px;width:331px;height:1px;background:#dfdfdf;"></div>
<div style="left:619px;top:524px;width:311px;height:18px;background:#e0e0e0;"></div>
<svg style="left:604px;top:527px;" width="9" height="9" viewBox="0 0 9 9"><rect x="0.5" y="0.5" width="8" height="8" rx="1.2" fill="url(#eg)" stroke="#96ccd4" stroke-width="1"/><rect x="1" y="8" width="7" height="1" fill="#b8b8b8"/><rect x="2" y="4" width="5" height="1" fill="#000"/></svg>
<span class="t" style="left:621.40px;top:524.69px;font-size:11px;line-height:15px;color:#000;letter-spacing:0.223px;">Absolute movement</span>
<div style="left:599px;top:561px;width:331px;height:1px;background:#dfdfdf;"></div>
<div style="left:639px;top:543px;width:291px;height:18px;background:#e0e0e0;"></div>
<svg style="left:624px;top:546px;" width="9" height="9" viewBox="0 0 9 9"><rect x="0.5" y="0.5" width="8" height="8" rx="1.2" fill="url(#eg)" stroke="#96ccd4" stroke-width="1"/><rect x="1" y="8" width="7" height="1" fill="#b8b8b8"/><rect x="2" y="4" width="5" height="1" fill="#000"/></svg>
<span class="t" style="left:641.40px;top:543.69px;font-size:11px;line-height:15px;color:#000;letter-spacing:0.131px;">Movement</span>
<div style="left:599px;top:580px;width:331px;height:1px;background:#dfdfdf;"></div>
<div style="left:792px;top:562px;width:1px;height:18px;background:#dfdfdf;"></div>
<span class="t" style="left:663.50px;top:563.69px;font-size:11px;line-height:15px;color:#000;">X</span>
<div style="left:599px;top:599px;width:331px;height:1px;background:#dfdfdf;"></div>
<div style="left:792px;top:581px;width:1px;height:18px;background:#dfdfdf;"></div>
<span class="t" style="left:663.50px;top:582.69px;font-size:11px;line-height:15px;color:#000;">Y</span>
<div style="left:599px;top:618px;width:331px;height:1px;background:#dfdfdf;"></div>
<div style="left:619px;top:600px;width:311px;height:18px;background:#e0e0e0;"></div>
<svg style="left:604px;top:603px;" width="9" height="9" viewBox="0 0 9 9"><rect x="0.5" y="0.5" width="8" height="8" rx="1.2" fill="url(#eg)" stroke="#96ccd4" stroke-width="1"/><rect x="1" y="8" width="7" height="1" fill="#b8b8b8"/><rect x="2" y="4" width="5" height="1" fill="#000"/></svg>
<span class="t" style="left:621.40px;top:600.69px;font-size:11px;line-height:15px;color:#000;letter-spacing:0.132px;">State variables</span>
<div style="left:599px;top:637px;width:331px;height:1px;background:#dfdfdf;"></div>
<div style="left:792px;top:619px;width:1px;height:18px;background:#dfdfdf;"></div>
<span class="t" style="left:643.50px;top:620.69px;font-size:11px;line-height:15px;color:#000;letter-spacing:-0.162px;">Invisible</span>
<div style="left:599px;top:656px;width:331px;height:1px;background:#dfdfdf;"></div>
<div style="left:792px;top:638px;width:1px;height:18px;background:#dfdfdf;"></div>
<span class="t" style="left:643.50px;top:639.69px;font-size:11px;line-height:15px;color:#000;letter-spacing:-0.078px;">Deactivate inputs</span>
<svg style="left:795px;top:107px;" width="13" height="15" viewBox="0 0 13 15"><rect x="1" y="1" width="11" height="12" fill="#ffff00"/><path d="M0.5,0 V13.5 H12.5" fill="none" stroke="#505050" stroke-width="1"/><path d="M2,8.5 L6,2.5 L11,7.5" fill="none" stroke="#8a8a60" stroke-width="1"/></svg>
<div style="left:796px;top:280px;width:31px;height:12px;background:#000;"></div>
</div>
</body></html>
